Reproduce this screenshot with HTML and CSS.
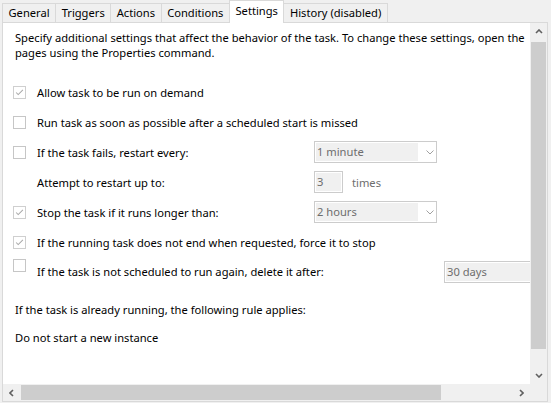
FILE: index.html
```html
<!DOCTYPE html>
<html lang="en">
<head>
    <meta charset="UTF-8">
    <title>Task Properties - Settings</title>
    <link rel="stylesheet" href="styles.css">
</head>
<body>

<div class="tabs">
	<div class="tab">General</div>
	<div class="tab">Triggers</div>
	<div class="tab">Actions</div>
	<div class="tab">Conditions</div>
	<div class="tab active">Settings</div>
	<div class="tab">History (disabled)</div>
</div>

<div class="panel">
	<div class="view">
		<p class="intro">Specify additional settings that affect the behavior of the task. To change these settings, open the<br>pages using the Properties command.</p>

		<div class="opts">
			<div class="opt">
				<span class="box checked"><svg viewBox="0 0 13 13"><polyline points="2.5,6.5 5,9 10.5,3.5"/></svg></span>
				<span class="lbl">Allow task to be run on demand</span>
			</div>
			<div class="opt">
				<span class="box"></span>
				<span class="lbl">Run task as soon as possible after a scheduled start is missed</span>
			</div>
			<div class="opt">
				<span class="box"></span>
				<span class="lbl">If the task fails, restart every:</span>
				<span class="combo"><span class="val">1 minute</span><svg class="chev" viewBox="0 0 8 5"><polyline points="0.5,0.5 4,4 7.5,0.5"/></svg></span>
			</div>
			<div class="opt">
				<span class="lbl">Attempt to restart up to:</span>
				<span class="spin-row"><span class="edit"><span class="val">3</span></span><span class="unit">times</span></span>
			</div>
			<div class="opt">
				<span class="box checked"><svg viewBox="0 0 13 13"><polyline points="2.5,6.5 5,9 10.5,3.5"/></svg></span>
				<span class="lbl">Stop the task if it runs longer than:</span>
				<span class="combo"><span class="val">2 hours</span><svg class="chev" viewBox="0 0 8 5"><polyline points="0.5,0.5 4,4 7.5,0.5"/></svg></span>
			</div>
			<div class="opt">
				<span class="box checked"><svg viewBox="0 0 13 13"><polyline points="2.5,6.5 5,9 10.5,3.5"/></svg></span>
				<span class="lbl">If the running task does not end when requested, force it to stop</span>
			</div>
			<div class="opt wide">
				<span class="box top"></span>
				<span class="lbl raised">If the task is not scheduled to run again, delete it after:</span>
				<span class="combo"><span class="val">30 days</span><svg class="chev" viewBox="0 0 8 5"><polyline points="0.5,0.5 4,4 7.5,0.5"/></svg></span>
			</div>
		</div>

		<p class="note">If the task is already running, the following rule applies:</p>
		<p class="note second">Do not start a new instance</p>
	</div>

	<!-- scrollbars -->
	<div class="vbar">
		<span class="arrow"><svg viewBox="0 0 8 5"><polyline points="1,4 4,1 7,4"/></svg></span>
		<span class="thumb"></span>
		<span class="fill"></span>
		<span class="arrow"><svg viewBox="0 0 8 5"><polyline points="1,1 4,4 7,1"/></svg></span>
	</div>
	<div class="hbar">
		<span class="arrow"><svg viewBox="0 0 5 8"><polyline points="4,1 1,4 4,7"/></svg></span>
		<span class="thumb"></span>
		<span class="fill"></span>
		<span class="arrow"><svg viewBox="0 0 5 8"><polyline points="1,1 4,4 1,7"/></svg></span>
	</div>
	<div class="corner"></div>
</div>

</body>
</html>
```

FILE: styles.css
```css
*{
	padding: 0;
	margin: 0;
	box-sizing: border-box;
}

body{
	font-family: "Segoe UI", "Noto Sans", sans-serif;
	font-size: 11.17px;
	color: #000;
	background-color: #f0f0f0;
	width: 551px;
	height: 403px;
	overflow: hidden;
}

/* tab strip */
.tabs{
	display: flex;
	align-items: flex-end;
	height: 22px;
	padding-left: 2px;
}

.tab{
	height: 19px;
	padding: 0 5.5px;
	border: 1px solid #d9d9d9;
	border-bottom: none;
	margin-left: -1px;
	background-color: #f0f0f0;
	line-height: 18px;
	white-space: nowrap;
}

.tab:first-child{
	margin-left: 0;
}

.tab.active{
	position: relative;
	z-index: 1;
	height: 23px;
	margin-bottom: -1px;
	background-color: #fff;
	line-height: 19px;
}

/* page body */
.panel{
	width: 546px;
	height: 380px;
	margin-left: 2px;
	border: 1px solid #d9d9d9;
	background-color: #fff;
	display: grid;
	grid-template-columns: 1fr 17px;
	grid-template-rows: 1fr 17px;
}

.view{
	overflow: hidden;
	padding: 7px 0 0 10px;
}

.intro{
	margin-left: 2px;
	line-height: 15px;
	white-space: nowrap;
}

.opts{
	margin-top: 17px;
}

.opt{
	display: grid;
	grid-template-columns: 13px 266px auto;
	column-gap: 11px;
	align-items: center;
	height: 30px;
	white-space: nowrap;
}

.opt.wide{
	grid-template-columns: 13px 396px auto;
}

.opt .lbl{
	grid-column: 2;
}

.opt .lbl.raised{
	margin-top: -2px;
}

.box{
	width: 13px;
	height: 13px;
	border: 1px solid #c6c6c6;
	background-color: #fff;
	display: flex;
}

.box.top{
	align-self: start;
	margin-top: 2px;
}

.box svg{
	width: 11px;
	height: 11px;
	fill: none;
	stroke: #a8a8a8;
	stroke-width: 1.2;
}

.box.checked{
	border-color: #cfcfcf;
}

/* disabled combo boxes and edit */
.combo{
	grid-column: 3;
	display: flex;
	align-items: center;
	width: 123px;
	height: 22px;
	padding: 1px;
	border: 1px solid #cccccc;
	color: #6d6d6d;
}

.combo .val,
.edit .val{
	display: block;
	height: 18px;
	line-height: 18px;
	padding-left: 1px;
	background-color: #f0f0f0;
}

.combo .val{
	width: 102px;
}

.chev{
	width: 8px;
	height: 5px;
	margin-left: 8px;
	fill: none;
	stroke: #a0a0a0;
	stroke-width: 1;
}

.spin-row{
	grid-column: 3;
	display: flex;
	align-items: center;
	gap: 9px;
	color: #6d6d6d;
}

.edit{
	width: 29px;
	height: 22px;
	padding: 1px;
	border: 1px solid #cccccc;
}

.note{
	margin: 15px 0 0 2px;
	line-height: 15px;
	white-space: nowrap;
}

.note.second{
	margin-top: 13px;
}

/* scrollbars */
.vbar,
.hbar{
	display: flex;
	background-color: #f0f0f0;
}

.vbar{
	flex-direction: column;
}

.arrow{
	flex: none;
	width: 17px;
	height: 17px;
	display: flex;
	justify-content: center;
	align-items: center;
}

.arrow svg{
	fill: none;
	stroke: #606060;
	stroke-width: 1.6;
}

.vbar .arrow svg{
	width: 8px;
	height: 5px;
}

.hbar .arrow svg{
	width: 5px;
	height: 8px;
}

.thumb{
	background-color: #cdcdcd;
}

.vbar .thumb{
	height: 307px;
	margin: 2px 1px 0 1px;
}

.hbar .thumb{
	width: 420px;
	margin: 1px 0 1px 1px;
}

.fill{
	flex: 1;
}

.corner{
	background-color: #f0f0f0;
}
```
